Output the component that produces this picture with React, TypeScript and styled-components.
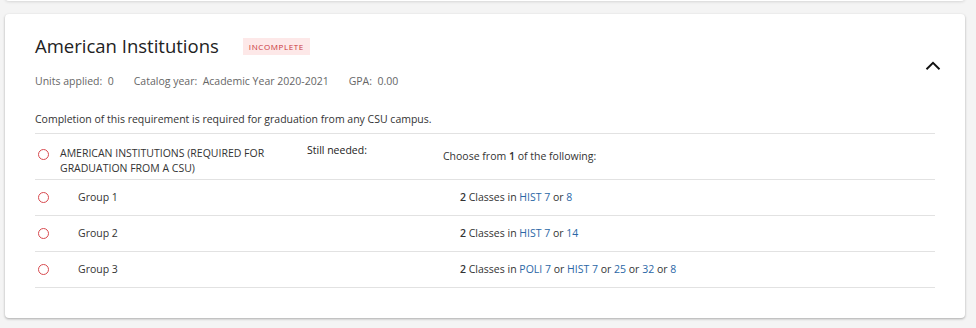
import React from "react";
import styled, { createGlobalStyle } from "styled-components";

const Global = createGlobalStyle`
  html, body { margin: 0; padding: 0; background: #f4f4f4; }
  body { font-family: "Open Sans", "Liberation Sans", sans-serif; color: #333; }
`;

const Page = styled.div`
  width: 976px;
  height: 328px;
  overflow: hidden;
  position: relative;
`;

const PrevCard = styled.div`
  margin: -20px 11px 0 5px;
  height: 21px;
  background: #fff;
  border-radius: 0 0 4px 4px;
  box-shadow: 0 1px 3px rgba(0,0,0,0.12);
`;

const Card = styled.section`
  margin: 13px 11px 0 5px;
  height: 304px;
  background: #fff;
  border-radius: 4px;
  box-shadow: 0 1px 3px rgba(0,0,0,0.2), 0 1px 2px rgba(0,0,0,0.12);
  padding: 20px 30px 0 30px;
  box-sizing: border-box;
  position: relative;
`;

const Header = styled.div`
  display: flex;
  align-items: center;
  gap: 24px;
  height: 22px;
`;

const Title = styled.h2`
  margin: 0;
  font-size: 18.5px;
  font-weight: 400;
  color: #222;
`;

const Badge = styled.span`
  background: #fde8e8;
  color: #c9343c;
  font-size: 8px;
  letter-spacing: 0.6px;
  padding: 4px 6px;
  line-height: 9px;
  margin-top: 2px;
`;

const Meta = styled.div`
  display: flex;
  gap: 20px;
  margin-top: 18px;
  font-size: 10.5px;
  color: #666;
  line-height: 14px;
`;

const Toggle = styled.button`
  position: absolute;
  right: 20px;
  top: 40px;
  border: 0;
  background: none;
  padding: 0;
  width: 24px;
  height: 24px;
  cursor: pointer;
`;

const Description = styled.p`
  margin: 24px 0 0 0;
  font-size: 10.5px;
  color: #333;
  line-height: 14px;
  padding-bottom: 7px;
  border-bottom: 1px solid #e2e2e2;
`;

const Row = styled.div<{ $tall?: boolean }>`
  display: grid;
  grid-template-columns: 25px 247px 1fr;
  align-items: center;
  height: ${(p) => (p.$tall ? "45px" : "35px")};
  border-bottom: 1px solid #e2e2e2;
  font-size: 10.5px;
  line-height: 15px;
  color: #333;
`;

const Dot = styled.span<{ $raise?: boolean }>`
  display: block;
  width: 9px;
  height: 9px;
  border: 1.3px solid #d84a4f;
  border-radius: 50%;
  margin-left: 3px;
  margin-bottom: ${(p) => (p.$raise ? "4px" : "0")};
`;

const Name = styled.div<{ $indent?: boolean; $tall?: boolean }>`
  padding-left: ${(p) => (p.$indent ? "18px" : "0")};
  padding-top: ${(p) => (p.$tall ? "9px" : "0")};
`;

const Needed = styled.div`
  display: flex;
  align-items: flex-start;
`;

const NeededLabel = styled.span`
  width: 136px;
  color: #222;
  margin-top: -6px;
`;

const Rule = styled.span<{ $offset?: number }>`
  padding-left: ${(p) => p.$offset ?? 0}px;
`;

const Link = styled.a`
  color: #2b67a6;
  text-decoration: none;
`;

const Strong = styled.b`
  font-weight: 600;
`;

function Chevron() {
  return (
    <svg width="24" height="24" viewBox="0 0 24 24">
      <path d="M5.5 15.2 L12 8.8 L18.5 15.2" fill="none" stroke="#111" strokeWidth="1.9" />
    </svg>
  );
}

const groups: { name: string; parts: (string | { link: string })[] }[] = [
  { name: "Group 1", parts: [{ link: "HIST 7" }, " or ", { link: "8" }] },
  { name: "Group 2", parts: [{ link: "HIST 7" }, " or ", { link: "14" }] },
  {
    name: "Group 3",
    parts: [
      { link: "POLI 7" }, " or ", { link: "HIST 7" }, " or ", { link: "25" },
      " or ", { link: "32" }, " or ", { link: "8" },
    ],
  },
];

export default function App() {
  return (
    <Page>
      <Global />
      <PrevCard />
      <Card>
        <Header>
          <Title>American Institutions</Title>
          <Badge>INCOMPLETE</Badge>
        </Header>
        <Toggle aria-label="Collapse">
          <Chevron />
        </Toggle>
        <Meta>
          <span>Units applied:&nbsp; 0</span>
          <span>Catalog year:&nbsp; Academic Year 2020-2021</span>
          <span>GPA:&nbsp; 0.00</span>
        </Meta>
        <Description>
          Completion of this requirement is required for graduation from any CSU campus.
        </Description>
        <Row $tall>
          <Dot $raise />
          <Name $tall>
            AMERICAN INSTITUTIONS (REQUIRED FOR
            <br />
            GRADUATION FROM A CSU)
          </Name>
          <Needed>
            <NeededLabel>Still needed:</NeededLabel>
            <span>
              Choose from <Strong>1</Strong> of the following:
            </span>
          </Needed>
        </Row>
        {groups.map((g) => (
          <Row key={g.name}>
            <Dot />
            <Name $indent>{g.name}</Name>
            <Rule $offset={153}>
              <Strong>2</Strong> Classes in{" "}
              {g.parts.map((p, i) =>
                typeof p === "string" ? (
                  <React.Fragment key={i}>{p}</React.Fragment>
                ) : (
                  <Link key={i} href="#">
                    {p.link}
                  </Link>
                )
              )}
            </Rule>
          </Row>
        ))}
      </Card>
    </Page>
  );
}
